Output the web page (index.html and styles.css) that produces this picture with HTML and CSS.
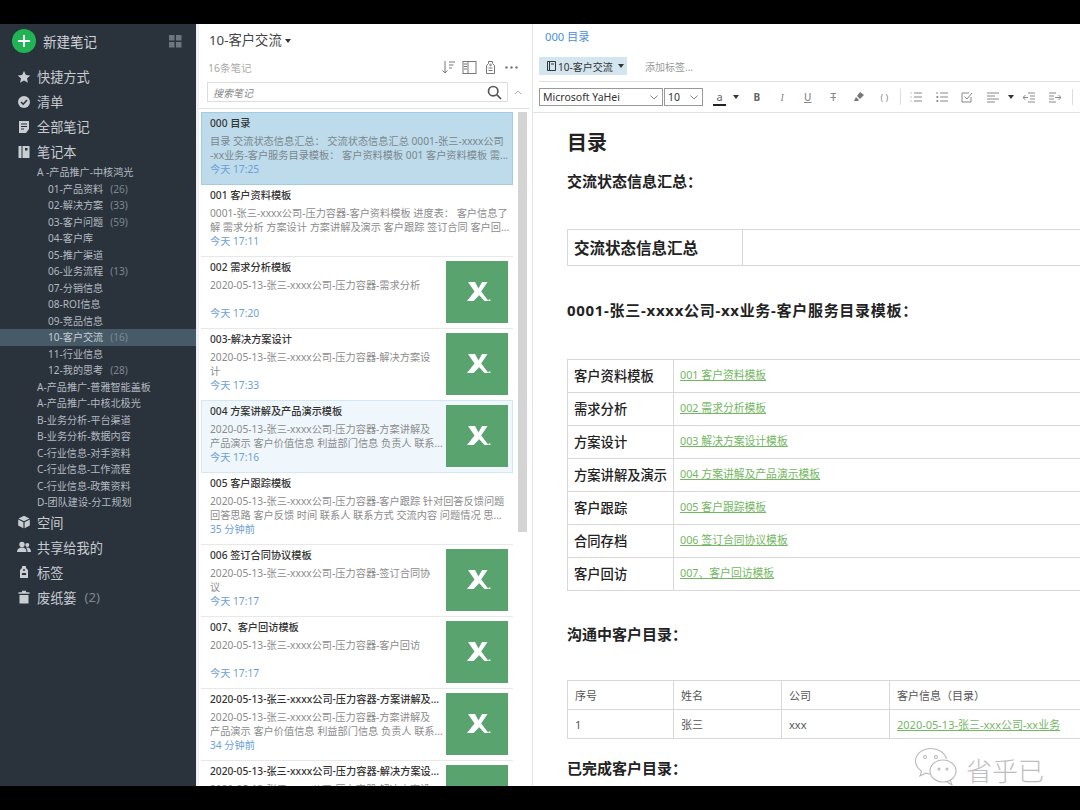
FILE: index.html
```html
<!DOCTYPE html>
<html lang="zh-CN">
<head>
<meta charset="utf-8">
<title>印象笔记</title>
<link rel="stylesheet" href="styles.css">
</head>
<body>
<svg width="0" height="0" class="defs">
  <defs>
    <symbol id="xl" viewBox="0 0 62 62">
      <path d="M22 21h7l3.500 6.500 3.500-6.500h5.500l-6.300 9.500 7.300 9.500h-7l-3.500-4.500-4.500 4.500H21l7.500-9.500z" fill="#fff"/>
      <path d="M29.500 40l3.500-6 5.500 6z" fill="#59a36f"/>
      <path d="M42.500 38.500h2v1.500h-2z" fill="#fff"/>
    </symbol>
  </defs>
</svg>
<div class="app">
  <aside class="side">
    <div class="new">
      <span class="plus"><svg width="14" height="14" viewBox="0 0 14 14"><path d="M7 1v12M1 7h12" stroke="#fff" stroke-width="2"/></svg></span>
      <span class="new-t">新建笔记</span>
      <svg class="grid-ic" width="13" height="13" viewBox="0 0 13 13"><path fill="#6d7680" d="M0 0h5.500v5.500H0zM7 0h5.500v5.500H7zM0 7h5.500v5.500H0zM7 7h5.500v5.500H7z"/></svg>
    </div>
    <div class="nav">
      <div class="n1"><svg width="14" height="14" viewBox="0 0 14 14"><path fill="#c9ced3" d="M7 1l1.900 4 4.300.5-3.200 3 .9 4.300L7 10.600l-3.900 2.200.9-4.300-3.200-3L5.100 5z"/></svg>快捷方式</div>
      <div class="n1"><svg width="14" height="14" viewBox="0 0 14 14"><circle cx="7" cy="7" r="6" fill="#c9ced3"/><path d="M4 7l2.200 2.200L10 5" stroke="#2a323c" stroke-width="1.600" fill="none"/></svg>清单</div>
      <div class="n1"><svg width="14" height="14" viewBox="0 0 14 14"><path fill="#c9ced3" d="M2 1h10v8l-3 4H2z"/><path d="M4 4h6M4 6.500h6M4 9h3" stroke="#2a323c"/></svg>全部笔记</div>
      <div class="n1"><svg width="14" height="14" viewBox="0 0 14 14"><path fill="#c9ced3" d="M1.500 1h3v12h-3zM5.500 1h7v12h-7z"/><path fill="#2a323c" d="M8 3h2.500v2.500H8z"/></svg>笔记本</div>
      <div class="n2">A -产品推广-中核鸿光</div>
      <div class="n3">01-产品资料<span class="cnt">(26)</span></div>
      <div class="n3">02-解决方案<span class="cnt">(33)</span></div>
      <div class="n3">03-客户问题<span class="cnt">(59)</span></div>
      <div class="n3">04-客户库</div>
      <div class="n3">05-推广渠道</div>
      <div class="n3">06-业务流程<span class="cnt">(13)</span></div>
      <div class="n3">07-分销信息</div>
      <div class="n3">08-ROI信息</div>
      <div class="n3">09-竞品信息</div>
      <div class="n3 on">10-客户交流<span class="cnt">(16)</span></div>
      <div class="n3">11-行业信息</div>
      <div class="n3">12-我的思考<span class="cnt">(28)</span></div>
      <div class="n2">A-产品推广-普雅智能盖板</div>
      <div class="n2">A-产品推广-中核北极光</div>
      <div class="n2">B-业务分析-平台渠道</div>
      <div class="n2">B-业务分析-数据内容</div>
      <div class="n2">C-行业信息-对手资料</div>
      <div class="n2">C-行业信息-工作流程</div>
      <div class="n2">C-行业信息-政策资料</div>
      <div class="n2 last">D-团队建设-分工规划</div>
      <div class="n1"><svg width="14" height="14" viewBox="0 0 14 14"><path fill="#c9ced3" d="M7 .8l5.500 2.700L7 6.200 1.500 3.500zM1.200 4.600l5.200 2.600v6L1.200 10.500zM12.800 4.600L7.600 7.200v6l5.200-2.700z"/></svg>空间</div>
      <div class="n1"><svg width="14" height="14" viewBox="0 0 14 14"><circle cx="5" cy="4.500" r="2.700" fill="#c9ced3"/><path fill="#c9ced3" d="M0 12c0-3 2-4.500 5-4.500s4.500 1.500 4.500 4.500z"/><circle cx="10.300" cy="5" r="2" fill="#c9ced3"/><path fill="#c9ced3" d="M10.500 12c0-2-.5-3.300-1.500-4.300 3-.7 5 1 5 4.300z"/></svg>共享给我的</div>
      <div class="n1"><svg width="14" height="14" viewBox="0 0 14 14"><path fill="#c9ced3" d="M5 1h4v2l2 2v8H3V5l2-2z"/><circle cx="7" cy="5" r="1" fill="#2a323c"/><path d="M5 9h4" stroke="#2a323c" stroke-width="2"/></svg>标签</div>
      <div class="n1"><svg width="14" height="14" viewBox="0 0 14 14"><path fill="#c9ced3" d="M5 .8h4v1.500h3.500v1.500h-11V2.300H5zM2.500 5h9v8.500h-9z"/></svg>废纸篓<span class="cnt big">(2)</span></div>
    </div>
  </aside>

  <section class="list">
    <div class="list-head">
      <div class="nb-title">10-客户交流<i class="caret"></i></div>
      <div class="meta-row">
        <span class="count">16条笔记</span>
        <span class="tools">
          <svg width="15" height="15" viewBox="0 0 15 15" fill="none" stroke="#777"><path d="M4 1v12M1.500 10.500L4 13l2.500-2.500M8 2h6M8 5h4.500M8 8h3"/></svg>
          <svg width="15" height="15" viewBox="0 0 15 15" fill="none" stroke="#777"><rect x="1" y="1.500" width="13" height="12"/><path d="M6 1.500v12" /><path d="M2 4h3M2 6.500h3M2 9h3" /></svg>
          <svg width="15" height="15" viewBox="0 0 15 15" fill="none" stroke="#777"><path d="M5.500 1.500h4v2l2 2v8h-8v-8l2-2z"/><path d="M5.500 8h4M5.500 10.500h4"/><circle cx="7.500" cy="5" r=".8"/></svg>
          <svg width="15" height="15" viewBox="0 0 15 15" fill="#777"><circle cx="2.500" cy="7.500" r="1.200"/><circle cx="7.500" cy="7.500" r="1.200"/><circle cx="12.500" cy="7.500" r="1.200"/></svg>
        </span>
      </div>
      <div class="search-row">
        <div class="search"><span>搜索笔记</span>
          <svg width="15" height="15" viewBox="0 0 15 15" fill="none" stroke="#555" stroke-width="1.700"><circle cx="6.200" cy="6.200" r="4.700"/><path d="M9.700 9.700l4.300 4.300"/></svg>
        </div>
        <svg class="up" width="8" height="5" viewBox="0 0 8 5" fill="none" stroke="#aaa"><path d="M1 4l3-3 3 3"/></svg>
      </div>
    </div>
    <div class="list-body">
      <div class="cards">
        <article class="card sel"><div class="c-main"><h3>000 目录</h3><p>目录 交流状态信息汇总： 交流状态信息汇总 0001-张三-xxxx公司<br>-xx业务-客户服务目录模板： 客户资料模板 001 客户资料模板 需...</p><time>今天 17:25</time></div></article>
        <article class="card"><div class="c-main"><h3>001 客户资料模板</h3><p>0001-张三-xxxx公司-压力容器-客户资料模板 进度表： 客户信息了<br>解 需求分析 方案设计 方案讲解及演示 客户跟踪 签订合同 客户回...</p><time>今天 17:11</time></div></article>
        <article class="card"><div class="c-main"><h3>002 需求分析模板</h3><p>2020-05-13-张三-xxxx公司-压力容器-需求分析</p><time>今天 17:20</time></div><svg class="thumb"><use href="#xl"/></svg></article>
        <article class="card"><div class="c-main"><h3>003-解决方案设计</h3><p>2020-05-13-张三-xxxx公司-压力容器-解决方案设<br>计</p><time>今天 17:33</time></div><svg class="thumb"><use href="#xl"/></svg></article>
        <article class="card hov"><div class="c-main"><h3>004 方案讲解及产品演示模板</h3><p>2020-05-13-张三-xxxx公司-压力容器-方案讲解及<br>产品演示 客户价值信息 利益部门信息 负责人 联系...</p><time>今天 17:16</time></div><svg class="thumb"><use href="#xl"/></svg></article>
        <article class="card"><div class="c-main"><h3>005 客户跟踪模板</h3><p>2020-05-13-张三-xxxx公司-压力容器-客户跟踪 针对回答反馈问题<br>回答思路 客户反馈 时间 联系人 联系方式 交流内容 问题情况 思...</p><time>35 分钟前</time></div></article>
        <article class="card"><div class="c-main"><h3>006 签订合同协议模板</h3><p>2020-05-13-张三-xxxx公司-压力容器-签订合同协<br>议</p><time>今天 17:17</time></div><svg class="thumb"><use href="#xl"/></svg></article>
        <article class="card"><div class="c-main"><h3>007、客户回访模板</h3><p>2020-05-13-张三-xxxx公司-压力容器-客户回访</p><time>今天 17:17</time></div><svg class="thumb"><use href="#xl"/></svg></article>
        <article class="card"><div class="c-main"><h3>2020-05-13-张三-xxxx公司-压力容器-方案讲解及...</h3><p>2020-05-13-张三-xxxx公司-压力容器-方案讲解及<br>产品演示 客户价值信息 利益部门信息 负责人 联系...</p><time>34 分钟前</time></div><svg class="thumb"><use href="#xl"/></svg></article>
        <article class="card"><div class="c-main"><h3>2020-05-13-张三-xxxx公司-压力容器-解决方案设...</h3><p>2020-05-13-张三-xxxx公司-压力容器-解决方案设</p></div><svg class="thumb"><use href="#xl"/></svg></article>
      </div>
      <div class="scroll"><div class="thumb-bar"></div></div>
    </div>
  </section>

  <section class="editor">
    <div class="ed-head">
      <div class="ed-title">000 目录</div>
      <div class="ed-tags">
        <span class="chip"><svg width="9" height="10" viewBox="0 0 9 10" fill="none" stroke="#333"><path d="M.5.500h8v9h-8zM2.500.500v9M4 3h3"/></svg>10-客户交流<i class="caret small"></i></span>
        <span class="add-tag">添加标签...</span>
      </div>
    </div>
    <div class="toolbar">
      <div class="sel-box font">Microsoft YaHei<svg width="8" height="5" viewBox="0 0 8 5" fill="none" stroke="#888"><path d="M.5.500L4 4 7.500.500"/></svg></div>
      <div class="sel-box size">10<svg width="8" height="5" viewBox="0 0 8 5" fill="none" stroke="#888"><path d="M.5.500L4 4 7.500.500"/></svg></div>
      <span class="tb-a">a</span><i class="caret small tb-c"></i>
      <span class="slot first b">B</span><span class="slot i">I</span><span class="slot u">U</span><span class="slot s">T</span>
      <span class="slot"><svg width="12" height="12" viewBox="0 0 12 12"><path fill="#777" d="M7 1l4 3-4 4-3-3zM3 6l3 3-1 1H1z"/></svg></span>
      <span class="slot code">( )</span>
      <i class="sep sep-a"></i>
      <span class="slot"><svg width="12" height="12" viewBox="0 0 12 12" fill="none" stroke="#888"><path d="M4 2h8M4 6h8M4 10h8M1 1.500v1M1 5.500v1M1 9.500v1"/></svg></span>
      <span class="slot"><svg width="12" height="12" viewBox="0 0 12 12" fill="none" stroke="#888"><path d="M4 2h8M4 6h8M4 10h8M1 1v2M.5 5.500h1.500v1H.5M.5 9.500h1.500v1H.5"/></svg></span>
      <span class="slot"><svg width="12" height="12" viewBox="0 0 12 12" fill="none" stroke="#888"><path d="M10 6v5H1V2h7M3.500 5.500L6 8l5-6"/></svg></span>
      <span class="slot"><svg width="12" height="12" viewBox="0 0 12 12" fill="none" stroke="#888"><path d="M0 2h12M0 5h8M0 8h12M0 11h8"/></svg></span><i class="caret small tb-c2"></i>
      <span class="slot after-c"><svg width="12" height="12" viewBox="0 0 12 12" fill="none" stroke="#888"><path d="M5 2h7M7 5h5M7 8h5M5 11h7M5 6.500H0M2.500 4L0 6.500 2.500 9"/></svg></span>
      <span class="slot"><svg width="12" height="12" viewBox="0 0 12 12" fill="none" stroke="#888"><path d="M0 2h7M0 5h5M0 8h5M0 11h7M6 6.500h6M9.500 4l2.500 2.500L9.500 9"/></svg></span>
      <i class="sep sep-b"></i>
    </div>
    <div class="doc">
      <h1>目录</h1>
      <h2 class="h-a">交流状态信息汇总：</h2>
      <table class="t1"><tr><th>交流状态信息汇总</th><td></td></tr></table>
      <h2 class="h-b">0001-张三-xxxx公司-xx业务-客户服务目录模板：</h2>
      <table class="t2">
        <tr><th>客户资料模板</th><td><a href="#">001 客户资料模板</a></td></tr>
        <tr><th>需求分析</th><td><a href="#">002 需求分析模板</a></td></tr>
        <tr><th>方案设计</th><td><a href="#">003 解决方案设计模板</a></td></tr>
        <tr><th>方案讲解及演示</th><td><a href="#">004 方案讲解及产品演示模板</a></td></tr>
        <tr><th>客户跟踪</th><td><a href="#">005 客户跟踪模板</a></td></tr>
        <tr><th>合同存档</th><td><a href="#">006 签订合同协议模板</a></td></tr>
        <tr><th>客户回访</th><td><a href="#">007、客户回访模板</a></td></tr>
      </table>
      <h2 class="h-c">沟通中客户目录：</h2>
      <table class="t3">
        <tr><td class="c1">序号</td><td class="c2">姓名</td><td class="c3">公司</td><td class="c4">客户信息（目录）</td></tr>
        <tr><td>1</td><td>张三</td><td>xxx</td><td><a href="#">2020-05-13-张三-xxx公司-xx业务</a></td></tr>
      </table>
      <h2 class="h-d">已完成客户目录：</h2>
    </div>
    <div class="mark">
      <svg width="44" height="40" viewBox="0 0 44 40" fill="none" stroke="#b9b9b9" stroke-width="1.100"><path d="M17 27c-2 0-4-.4-5-1l-6 3 1.500-5C4 21.500 1.500 18 1.500 14 1.500 7 8.500 1.500 17 1.500c7.500 0 14 4.500 15.500 10.500"/><ellipse cx="29" cy="24" rx="13" ry="11"/><path d="M36 33l2 5-5-3"/><circle cx="11" cy="10" r="1.500"/><circle cx="22" cy="10" r="1.500"/><circle cx="25" cy="22" r="1"/><circle cx="33" cy="22" r="1"/></svg>
      <span>省乎已</span>
    </div>
  </section>
</div>
</body>
</html>
```
FILE: styles.css
```css
* { box-sizing: border-box; }
html, body { margin: 0; height: 810px; overflow: hidden; background: #000; }
body { padding: 24px 0; font-family: "Noto Sans", "Noto Sans CJK SC", sans-serif; }
.defs { position: absolute; }
.app { display: flex; height: 762px; width: 1080px; overflow: hidden; background: #fff; }

/* sidebar */
.side { width: 199px; flex: none; background: #2a323c; border-right: 3px solid #f0f1f2; color: #c6cbd0; }
.new { display: flex; align-items: center; height: 34px; padding: 0 14px 0 12px; }
.plus { width: 24px; height: 24px; border-radius: 50%; background: #20b455; display: flex; align-items: center; justify-content: center; }
.new-t { margin-left: 7px; font-size: 13.500px; flex: 1; color: #cfd3d7; }
.nav { padding-top: 6px; }
.n1 { display: flex; align-items: center; height: 25px; padding-left: 17px; font-size: 13.200px; color: #c6cbd0; }
.n1 svg { margin-right: 6px; flex: none; }
.n2, .n3 { height: 16.500px; line-height: 16.500px; font-size: 10.100px; white-space: nowrap; color: #b4bac0; }
.n2 { padding-left: 37px; }
.n2.last { margin-bottom: -1px; }
.n3 { padding-left: 48px; }
.n3.on { background: #465a68; color: #c8ced3; }
.cnt { margin-left: 7px; color: #7f8890; }
.cnt.big { margin-left: 8px; }

/* note list */
.list { width: 334px; flex: none; display: flex; flex-direction: column; border-right: 1px solid #e4e4e4; }
.list-head { height: 85px; margin-bottom: 3px; padding: 8px 0 0 10px; border-bottom: 1px solid #e3e3e3; margin-right: 2px; flex: none; }
.nb-title { height: 17px; line-height: 17px; font-size: 13.300px; color: #444; display: flex; align-items: center; }
.caret { width: 0; height: 0; flex: none; border: 3.500px solid transparent; border-top: 4px solid #333; border-bottom: 0; margin-left: 3px; display: inline-block; }
.caret.small { border-width: 3px; border-top-width: 4px; border-bottom-width: 0; }
.meta-row { display: flex; align-items: center; justify-content: space-between; margin-top: 8px; height: 20px; padding-right: 11px; margin-left: -1px; }
.count { font-size: 10.500px; color: #aaa; }
.tools { display: flex; gap: 6px; }
.search-row { display: flex; align-items: center; margin-top: 5px; }
.search { width: 301px; margin-left: -2px; height: 20px; border: 1px solid #ddd; display: flex; align-items: center; justify-content: space-between; padding: 0 5px; font-size: 10px; font-style: italic; color: #888; }
.up { margin-left: 6px; }
.list-body { flex: 1; display: flex; overflow: hidden; }
.cards { width: 319px; padding-left: 2px; overflow: hidden; flex: none; }
.card { height: 72px; width: 312px; display: flex; padding: 3px 5px 0 9px; border-bottom: 1px solid #e8e8e8; }
.c-main { flex: 1; min-width: 0; display: flex; flex-direction: column; }
.card h3 { margin: 0; font-size: 10.200px; line-height: 14px; font-weight: 500; color: #333; white-space: nowrap; }
.card p { margin: 4px 0 0; height: 28px; font-size: 10.200px; line-height: 14px; color: #8b8b8b; white-space: nowrap; }
.card time { display: block; font-size: 10.200px; line-height: 14px; color: #6c9fd6; }
.thumb { width: 62px; height: 62px; margin: 1px 0 0 4px; background: #59a36f; flex: none; }
.card.sel { height: 73px; background: #bddbea; border: 1px solid #9fcde6; padding-left: 8px; }
.card.sel p { color: #7b868c; }
.card.hov { height: 73px; margin-top: -1px; background: #eff7fc; border: 1px solid #d3e8f5; padding: 3px 4px 0 8px; }
.scroll { width: 9px; flex: none; }
.thumb-bar { height: 420px; background: #d4d4d4; }

/* editor */
.editor { flex: 1; min-width: 0; position: relative; overflow: hidden; }
.ed-head { height: 58px; margin-left: 6px; padding-top: 6px; border-bottom: 1px solid #e2e2e2; }
.ed-title { font-size: 11.200px; line-height: 14px; color: #4a8fd6; padding-left: 6px; }
.ed-tags { display: flex; align-items: center; margin-top: 13px; }
.chip { width: 88px; height: 18px; background: #d3e5ef; display: flex; align-items: center; padding-left: 8px; font-size: 10px; color: #333; gap: 2px; }
.add-tag { margin-left: 18px; font-size: 10px; color: #999; }
.toolbar { height: 31px; border-bottom: 1px solid #e2e2e2; display: flex; align-items: center; padding-left: 6px; white-space: nowrap; }
.sel-box { height: 18px; border: 1px solid #999; font-size: 10.500px; color: #333; display: flex; align-items: center; justify-content: space-between; padding: 0 4px 0 3px; flex: none; }
.font { width: 124px; }
.size { width: 39px; margin-left: 1px; }
.tb-a { margin-left: 10px; width: 13px; text-align: center; font-size: 11px; line-height: 15px; color: #666; border-bottom: 2px solid #222; flex: none; }
.tb-c { margin-left: 7px; }
.slot { width: 25.500px; height: 16px; flex: none; display: flex; align-items: center; justify-content: center; font-size: 10px; font-weight: 500; color: #888; }
.slot.first { margin-left: 5px; }
.slot.b { color: #666; font-weight: 700; }
.slot.i { font-style: italic; font-family: "Liberation Serif", serif; }
.slot.u { text-decoration: underline; }
.slot.s { text-decoration: line-through; }
.slot.code { font-size: 9px; font-weight: 400; }
.tb-c2 { margin-left: 2px; }
.after-c { margin-left: 3px; }
.sep { width: 1px; height: 16px; background: #ddd; flex: none; }
.sep-a { margin: 0 3px 0 2.500px; }
.sep-b { margin-left: 4px; }

.doc { padding-left: 34px; width: 734px; }
.doc h1 { margin: 17px 0 0; font-size: 20px; line-height: 26px; font-weight: 700; color: #222; }
.doc h2 { margin: 0; font-size: 15px; line-height: 20px; font-weight: 700; color: #222; white-space: nowrap; }
.h-a { padding-top: 15px; }
.h-b { padding-top: 34px; letter-spacing: .7px; }
.h-c { padding-top: 33px; }
.h-d { padding-top: 19px; }
.doc table { border-collapse: collapse; table-layout: fixed; width: 700px; }
.doc th, .doc td { border: 1px solid #d8d8d8; padding: 0 7px; text-align: left; vertical-align: middle; }
.doc th { font-weight: 500; color: #222; white-space: nowrap; padding-left: 6px; }
.t1 { margin-top: 38px; }
.t1 tr { height: 36px; }
.doc .t1 th { width: 175px; font-size: 15.500px; font-weight: 700; }
.t2 { margin-top: 39px; }
.t2 tr { height: 33px; }
.doc .t2 th { width: 106px; font-size: 13.300px; padding-bottom: 1px; }
.doc .t2 td { font-size: 10.800px; vertical-align: top; padding: 6px 6px 0; }
.doc a { color: #74b763; text-decoration: underline; }
.t3 { margin-top: 36px; }
.t3 tr { height: 29px; }
.doc .t3 td { font-size: 11px; color: #555; }
.c1 { width: 106px; }
.c2 { width: 108px; }
.c3 { width: 108px; }
.c4 { width: 378px; }
.mark { position: absolute; left: 381px; top: 723px; display: flex; align-items: center; gap: 8px; color: #bdbdbd; font-size: 26px; font-weight: 300; line-height: 30px; }
.mark span { padding-top: 8px; }
```
